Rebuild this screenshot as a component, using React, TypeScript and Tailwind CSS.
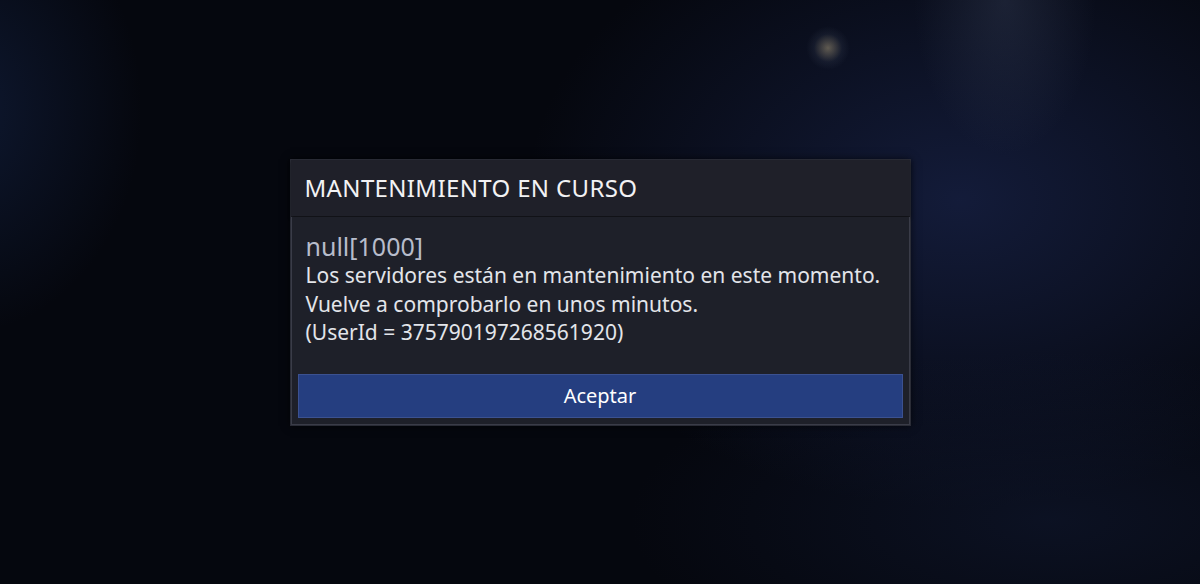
import React from "react";

export default function App() {
  return (
    <div
      className="relative w-[1200px] h-[584px] overflow-hidden bg-[#05070e]"
      style={{ fontFamily: '"Noto Sans", "Open Sans", sans-serif' }}
    >
      {/* background lights */}
      <div className="absolute inset-0 bg-[radial-gradient(ellipse_620px_440px_at_960px_200px,rgba(28,40,84,0.62),transparent_70%)]" />
      <div className="absolute inset-0 bg-[radial-gradient(ellipse_260px_320px_at_-40px_110px,rgba(25,45,90,0.45),transparent_70%)]" />
      <div className="absolute inset-0 bg-[radial-gradient(ellipse_600px_240px_at_1050px_520px,rgba(20,30,60,0.45),transparent_70%)]" />
      <div className="absolute inset-0 bg-[radial-gradient(ellipse_130px_220px_at_1005px_0px,rgba(60,70,95,0.35),transparent_70%)]" />
      <div className="absolute left-[806px] top-[26px] w-[44px] h-[44px] rounded-full bg-[radial-gradient(circle,rgba(180,165,130,0.5),rgba(80,90,110,0.15)_45%,transparent_70%)]" />

      <div className="relative flex h-full w-full items-start justify-center pt-[159px]">
        <div className="w-[621px] border border-[#2a2c36] bg-[#1e2029] shadow-[0_0_8px_rgba(0,0,0,0.6)]">
          <div className="h-[56px] flex items-center pl-[14px] bg-[#1f2029] shadow-[0_2px_3px_rgba(0,0,0,0.5)]">
            <span className="text-[24px] text-[#f2f2f4] tracking-[0.35px]">MANTENIMIENTO EN CURSO</span>
          </div>
          <div className="border border-[#3a3c48] border-t-0 mt-[1px] px-[14px] pt-[14px] pb-[6px] bg-[#1e2029]">
            <div className="text-[25px] leading-[30px] text-[#b7bccb]">null[1000]</div>
            <div className="text-[21px] leading-[28.5px] text-[#e3e5ea]">
              <div>Los servidores están en mantenimiento en este momento.</div>
              <div>Vuelve a comprobarlo en unos minutos.</div>
              <div>(UserId = 375790197268561920)</div>
            </div>
            <div className="mt-[27px] -mx-[8px] h-[44px] flex items-center justify-center bg-[#253e80] border border-[#3b5190] text-[20px] text-white">
              Aceptar
            </div>
          </div>
        </div>
      </div>
    </div>
  );
}
